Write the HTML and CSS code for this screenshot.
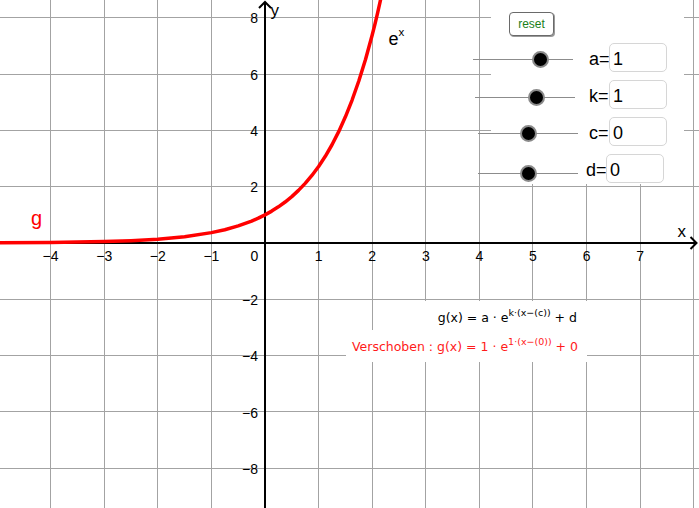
FILE: index.html
```html
<!DOCTYPE html>
<html lang="de">
<head>
<meta charset="utf-8">
<title>Exponentialfunktion verschieben</title>
<link rel="stylesheet" href="styles.css">
</head>
<body>
<div class="stage">
  <svg class="graph" width="699" height="508" viewBox="0 0 699 508" xmlns="http://www.w3.org/2000/svg">
    <g class="grid">
      <line x1="50.5" y1="0" x2="50.5" y2="508"/>
      <line x1="104.5" y1="0" x2="104.5" y2="508"/>
      <line x1="157.5" y1="0" x2="157.5" y2="508"/>
      <line x1="211.5" y1="0" x2="211.5" y2="508"/>
      <line x1="318.5" y1="0" x2="318.5" y2="508"/>
      <line x1="372.5" y1="0" x2="372.5" y2="508"/>
      <line x1="425.5" y1="0" x2="425.5" y2="508"/>
      <line x1="479.5" y1="0" x2="479.5" y2="508"/>
      <line x1="532.5" y1="0" x2="532.5" y2="508"/>
      <line x1="586.5" y1="0" x2="586.5" y2="508"/>
      <line x1="640.5" y1="0" x2="640.5" y2="508"/>
      <line x1="693.5" y1="0" x2="693.5" y2="508"/>
      <line x1="0" y1="17.5" x2="699" y2="17.5"/>
      <line x1="0" y1="74.5" x2="699" y2="74.5"/>
      <line x1="0" y1="130.5" x2="699" y2="130.5"/>
      <line x1="0" y1="186.5" x2="699" y2="186.5"/>
      <line x1="0" y1="299.5" x2="699" y2="299.5"/>
      <line x1="0" y1="355.5" x2="699" y2="355.5"/>
      <line x1="0" y1="411.5" x2="699" y2="411.5"/>
      <line x1="0" y1="468.5" x2="699" y2="468.5"/>
    </g>
    <g class="axes">
      <line x1="0" y1="243" x2="696" y2="243"/>
      <polyline points="690.5,237 696.5,243 690.5,249"/>
      <line x1="265" y1="2" x2="265" y2="508"/>
      <polyline points="259,8 265,2 271,8"/>
    </g>
    <g class="ticks-x">
      <text x="50.6" y="260.5">−4</text>
      <text x="104.2" y="260.5">−3</text>
      <text x="157.8" y="260.5">−2</text>
      <text x="211.4" y="260.5">−1</text>
      <text x="254.5" y="260.5">0</text>
      <text x="318.6" y="260.5">1</text>
      <text x="372.2" y="260.5">2</text>
      <text x="425.8" y="260.5">3</text>
      <text x="479.4" y="260.5">4</text>
      <text x="533" y="260.5">5</text>
      <text x="586.6" y="260.5">6</text>
      <text x="640.2" y="260.5">7</text>
    </g>
    <g class="ticks-y">
      <text x="258" y="23">8</text>
      <text x="258" y="79.5">6</text>
      <text x="258" y="135.5">4</text>
      <text x="258" y="192">2</text>
      <text x="258" y="305">−2</text>
      <text x="258" y="361">−4</text>
      <text x="258" y="417.5">−6</text>
      <text x="258" y="473.5">−8</text>
    </g>
    <text class="axis-label" x="677.5" y="237">x</text>
    <text class="axis-label" x="270.5" y="16">y</text>
    <path class="curve" d="M-3,242.81 L50.6,242.48 L104.2,241.6 L131,240.69 L157.8,239.19 L184.6,236.72 L211.4,232.64 L224.8,229.7 L238.2,225.93 L251.6,221.08 L258.3,218.16 L265,214.85 L271.7,211.1 L278.4,206.85 L285.1,202.04 L291.8,196.59 L298.5,190.41 L305.2,183.41 L311.9,175.47 L318.6,166.48 L325.3,156.29 L332,144.75 L338.7,131.66 L345.4,116.84 L352.1,100.04 L358.8,81.01 L365.5,59.44 L372.2,35 L374.9,24.33 L377.56,13.12 L380.2,1.33 L382.92,-11.05"/>
    <text class="curve-label" x="31" y="225">g</text>
    <text class="fn-label" x="388.5" y="45">e<tspan class="fn-sup" dy="-9.5">x</tspan></text>
  </svg>

  <div class="panel">
    <button class="reset" type="button">reset</button>
    <div class="row row-a">
      <div class="slider"><span class="knob" style="left:67%"></span></div>
      <span class="label">a=</span>
      <div class="field">1</div>
    </div>
    <div class="row row-k">
      <div class="slider"><span class="knob" style="left:61%"></span></div>
      <span class="label">k=</span>
      <div class="field">1</div>
    </div>
    <div class="row row-c">
      <div class="slider"><span class="knob" style="left:50%"></span></div>
      <span class="label">c=</span>
      <div class="field">0</div>
    </div>
    <div class="row row-d">
      <div class="slider"><span class="knob" style="left:50%"></span></div>
      <span class="label">d=</span>
      <div class="field">0</div>
    </div>
  </div>

  <div class="formulas">
    <div class="formula f-general">g(x) = a · e<span class="sup">k·(x−(c))</span> + d</div>
    <div class="formula f-shifted">Verschoben : g(x) = 1 · e<span class="sup">1·(x−(0))</span> + 0</div>
  </div>
</div>
</body>
</html>
```

FILE: styles.css
```css
html, body {
  margin: 0;
  padding: 0;
  background: #fff;
}

.stage {
  position: relative;
  width: 699px;
  height: 508px;
  overflow: hidden;
  font-family: "Liberation Sans", Arial, sans-serif;
}

.graph {
  display: block;
}

.grid line {
  stroke: #a3a3a3;
  stroke-width: 1;
  shape-rendering: crispEdges;
}

.axes line,
.axes polyline {
  stroke: #000;
  stroke-width: 2;
  fill: none;
}

.ticks-x text,
.ticks-y text {
  font-family: "Liberation Sans", Arial, sans-serif;
  font-size: 14px;
  fill: #000;
}

.ticks-x text {
  text-anchor: middle;
}

.ticks-y text {
  text-anchor: end;
}

.axis-label {
  font-family: "Liberation Sans", Arial, sans-serif;
  font-size: 17px;
  fill: #000;
}

.curve {
  fill: none;
  stroke: #ff0000;
  stroke-width: 3.5;
  stroke-linejoin: round;
  stroke-linecap: round;
}

.curve-label {
  font-family: "Liberation Sans", Arial, sans-serif;
  font-size: 20px;
  fill: #ff0000;
}

.fn-label {
  font-family: "Liberation Sans", Arial, sans-serif;
  font-size: 18px;
  fill: #000;
}

.fn-sup {
  font-size: 11.5px;
}

/* slider panel */
.panel {
  position: absolute;
  left: 473px;
  top: 0;
  width: 211px;
  height: 184px;
  box-sizing: border-box;
  padding-top: 12px;
  display: flex;
  flex-direction: column;
  gap: 8px;
  background: linear-gradient(to right, transparent 18px, #fff 18px);
}

.reset {
  align-self: flex-start;
  margin-left: 36px;
  margin-bottom: -1px;
  width: 45px;
  height: 24px;
  padding: 0;
  border: 1px solid #6a6a6a;
  border-radius: 4px;
  background: #fff;
  box-shadow: 1px 1px 0 #9a9a9a;
  color: #1a7f1a;
  font-family: "Liberation Sans", Arial, sans-serif;
  font-size: 12px;
  line-height: 22px;
}

.row {
  display: grid;
  grid-template-columns: 114px 22px 58px;
  height: 29px;
}

.row-d {
  grid-template-columns: 111px 22px 58px;
}

.slider {
  position: relative;
  width: 100px;
  height: 1px;
  margin-top: 16px;
  background: #8c8c8c;
}

.row-k .slider { margin-left: 2px; margin-top: 17px; }
.row-c .slider { margin-left: 5px; }
.row-d .slider { margin-left: 5px; margin-top: 19px; }

.knob {
  position: absolute;
  top: 0.5px;
  width: 17px;
  height: 17px;
  box-sizing: border-box;
  margin: -8.5px 0 0 -8.5px;
  border: 2.5px solid #8a8a8a;
  border-radius: 50%;
  background: #000;
}

.label {
  padding-left: 2px;
  padding-top: 4px;
  font-size: 18px;
  line-height: 25px;
  color: #000;
}

.field {
  box-sizing: border-box;
  height: 29px;
  padding: 4px 0 0 3px;
  border: 1px solid #d6d6d6;
  border-radius: 5px;
  background: #fff;
  font-size: 18px;
  line-height: 23px;
  color: #000;
}

/* formulas */
.formulas {
  position: absolute;
  right: 112px;
  top: 301px;
  display: flex;
  flex-direction: column;
  align-items: flex-end;
  font-family: "DejaVu Sans", "Liberation Sans", sans-serif;
  font-size: 12.5px;
  white-space: nowrap;
}

.formula {
  background: #fff;
}

.f-general {
  height: 29px;
  padding: 5px 10px 0 16px;
  box-sizing: border-box;
  line-height: 24px;
  color: #000;
}

.f-shifted {
  height: 32px;
  padding: 2px 9px 0 6px;
  box-sizing: border-box;
  line-height: 30px;
  color: #ff1a1a;
}

.sup {
  position: relative;
  top: -6.5px;
  font-size: 9.5px;
}
```
